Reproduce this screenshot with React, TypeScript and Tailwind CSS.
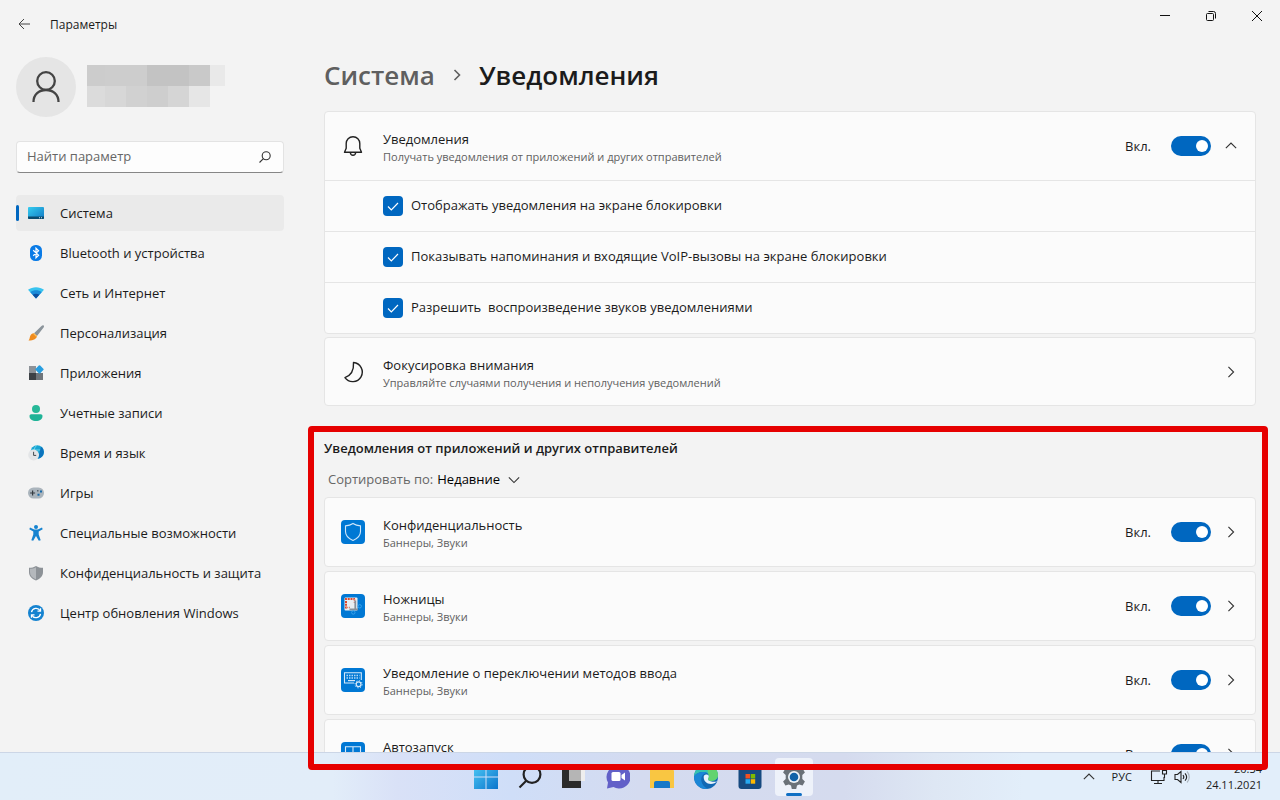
import React from "react";

const navItems = [
  { label: "Система", icon: "system" },
  { label: "Bluetooth и устройства", icon: "bluetooth" },
  { label: "Сеть и Интернет", icon: "wifi" },
  { label: "Персонализация", icon: "brush" },
  { label: "Приложения", icon: "apps" },
  { label: "Учетные записи", icon: "account" },
  { label: "Время и язык", icon: "time" },
  { label: "Игры", icon: "games" },
  { label: "Специальные возможности", icon: "access" },
  { label: "Конфиденциальность и защита", icon: "shield" },
  { label: "Центр обновления Windows", icon: "update" },
];

const checks = [
  "Отображать уведомления на экране блокировки",
  "Показывать напоминания и входящие VoIP-вызовы на экране блокировки",
  "Разрешить  воспроизведение звуков уведомлениями",
];

const senders = [
  { name: "Конфиденциальность", icon: "privacy" },
  { name: "Ножницы", icon: "snip" },
  { name: "Уведомление о переключении методов ввода", icon: "keyboard" },
  { name: "Автозапуск", icon: "autoplay" },
];

const navShapes: Record<string, React.ReactNode> = {
  system: (
    <>
      <rect x="0" y="2" width="16" height="12" rx="1" fill="url(#sys)" />
      <path d="M0 11.5h16V13a1 1 0 0 1-1 1H1a1 1 0 0 1-1-1z" fill="#0b4a6e" />
      <path d="M11 12.3h1v1h-1zM13 12.3h1v1h-1z" fill="#cfe6f2" />
    </>
  ),
  bluetooth: (
    <>
      <rect x="2" y="0" width="12" height="16" rx="5.5" fill="#0a7be6" />
      <path d="M5.2 5.3l5.400 5L8 12.800V3.200l2.600 2.500-5.400 5" fill="none" stroke="#fff" strokeWidth="1.200" />
    </>
  ),
  wifi: (
    <>
      <path d="M0 4.700C4.500 1.300 11.500 1.300 16 4.700L8 13.500z" fill="#38c3ef" />
      <path d="M2.300 7.200c3.300-2.600 8.100-2.600 11.400 0L8 13.500z" fill="#1a8bd8" />
      <path d="M4.600 9.800c2-1.500 4.800-1.500 6.800 0L8 13.500z" fill="#0c4f9f" />
    </>
  ),
  brush: (
    <>
      <path d="M15.600.4c.8.800.3 1.700-.2 2.400L9 11 6 8.200 13.500.9c.7-.6 1.500-1 2.100-.5z" fill="#8b949b" />
      <path d="M6 8.200L9 11c-.3 2.600-3 4.500-8.500 4.600 1.300-1.300 1-2.500 1.600-4.300.7-2 2.300-3.200 3.900-3.100z" fill="#f08c1e" />
      <path d="M6 8.200L9 11l-.4 1.300-3.800-3.700z" fill="#fbbd55" />
    </>
  ),
  apps: (
    <>
      <path d="M1 1h7v7H1z" fill="#8d9298" />
      <path d="M1 8h7v7H1z" fill="#3d4146" />
      <path d="M8 8h7v7H8z" fill="#6f757b" />
      <rect x="8.300" y="1.200" width="6.400" height="6.400" rx="1" transform="rotate(45 11.500 4.400)" fill="#279ee0" />
    </>
  ),
  account: (
    <>
      <circle cx="8" cy="4" r="4" fill="#27b898" />
      <path d="M1.500 11c0-1 .7-1.700 1.700-1.700h9.600c1 0 1.700.7 1.700 1.700 0 3.300-2.800 5-6.500 5s-6.500-1.700-6.500-5z" fill="#1fb397" />
    </>
  ),
  time: (
    <>
      <circle cx="9.200" cy="7" r="6.800" fill="#1aa5d3" />
      <path d="M9 .3c-4 2-4 11 1 13.400M3 5h12.500M3 9.500h12" fill="none" stroke="#7be0ef" strokeWidth=".8" />
      <path d="M13 1.500a6.800 6.800 0 0 1-3 12.200z" fill="#0c73bd" />
      <circle cx="5.600" cy="10" r="5.400" fill="#e3e5e7" />
      <path d="M5.600 6.800v3.600h2.600" fill="none" stroke="#43494e" strokeWidth="1" />
    </>
  ),
  games: (
    <>
      <rect x="0" y="2.500" width="16" height="11" rx="5.500" fill="#aab4bc" />
      <path d="M4.600 5.500v5M2.100 8h5" stroke="#343a40" strokeWidth="1.200" />
      <path d="M9.500 8.800h2v2h-2zM12 5.500h2v2h-2z" fill="#1769a8" />
      <path d="M9 5h1.500v1.500H9z" fill="#59646d" />
    </>
  ),
  access: (
    <>
      <circle cx="8" cy="2" r="2" fill="#1583d0" />
      <path d="M2 2.600l4.200 1.900h3.600L14 2.600l.7 1.600-4 2.200v3.200l2 5.600-1.900.6L8 11l-2.800 4.800-1.900-.6 2-5.600V6.400l-4-2.200z" fill="#1583d0" />
    </>
  ),
  shield: (
    <>
      <path d="M8 1c2 1.300 4.300 1.800 7 1.800V7c0 4-2.500 6.700-7 8.500C3.500 13.700 1 11 1 7V2.800C3.700 2.800 6 2.300 8 1z" fill="#8d9297" />
      <path d="M8 2.200v12.200C4.200 12.800 2 10.500 2 7V3.700c2.300 0 4.300-.5 6-1.500z" fill="#b4b8bc" />
    </>
  ),
  update: (
    <>
      <circle cx="8" cy="8" r="8" fill="#1583d0" />
      <path d="M3.500 7.200a4.600 4.600 0 0 1 8.600-1.400M12.500 8.800a4.600 4.600 0 0 1-8.600 1.400" fill="none" stroke="#fff" strokeWidth="1.300" />
      <path d="M12.500 3.200v3H9.500M3.500 12.800v-3h3" fill="none" stroke="#fff" strokeWidth="1.300" />
    </>
  ),
};

const NavIcon = ({ name }: { name: string }) => (
  <svg viewBox="0 0 16 16" className="size-4 shrink-0">
    <defs>
      <linearGradient id="sys" x1="0" y1="0" x2="1" y2="1">
        <stop offset="0" stopColor="#35cdf0" />
        <stop offset="1" stopColor="#1279c4" />
      </linearGradient>
    </defs>
    {navShapes[name]}
  </svg>
);

const senderShapes: Record<string, React.ReactNode> = {
  privacy: (
    <path d="M12 3.500c2.200 1.500 4.500 2.200 7.500 2.400v5.500c0 4.200-2.900 7-7.500 9-4.600-2-7.500-4.800-7.500-9V5.900C7.500 5.700 9.800 5 12 3.500z" fill="none" stroke="#cfe6fa" strokeWidth="1.100" />
  ),
  snip: (
    <>
      <rect x="3.500" y="3.500" width="13" height="13" rx="1" fill="#e9eef2" />
      <path d="M5 14.500V5h9" fill="none" stroke="#dd4a2f" strokeWidth="2" strokeDasharray="2 .8" />
      <path d="M5 13.500h4M13.500 5v4" fill="none" stroke="#e38673" strokeWidth="1.600" strokeDasharray="2 .8" />
      <path d="M14.300 6.500v8.500M8.500 15.300h8.500" stroke="#87919a" strokeWidth="1.800" />
      <circle cx="12.300" cy="18.500" r="1.700" fill="none" stroke="#36a1ea" />
      <circle cx="18.700" cy="12.300" r="1.700" fill="none" stroke="#36a1ea" />
    </>
  ),
  keyboard: (
    <>
      <path d="M13 15H3.500V4.700h16.800V12" fill="none" stroke="#d6eafa" strokeWidth="1.100" />
      <path d="M5.500 7.500h13M5.500 10h13" stroke="#b6d9f6" strokeWidth="1.300" strokeDasharray="1.500 1" />
      <path d="M7 12.600h7" stroke="#d6eafa" strokeWidth="1.200" />
      <circle cx="17.600" cy="16.300" r="2.400" fill="#0078d4" stroke="#d6eafa" strokeWidth="1.200" />
      <circle cx="17.600" cy="16.300" r="3.600" fill="none" stroke="#d6eafa" strokeWidth="1" strokeDasharray="1.200 1.600" />
    </>
  ),
  autoplay: (
    <path d="M4.500 4.700h15v12h-15zM12 4.700v12M4.500 10.700h15" fill="none" stroke="#d6eafa" strokeWidth="1.100" />
  ),
};

const Chevron = ({ dir }: { dir: "up" | "right" | "down" }) => {
  const paths = { up: "M1 9.500l6-6 6 6", right: "M4 1l6 6-6 6", down: "M1 4l6 6 6-6" };
  return (
    <svg viewBox="0 0 14 14" className="size-3 shrink-0">
      <path d={paths[dir]} fill="none" stroke="#333" strokeWidth="1.300" />
    </svg>
  );
};

const Toggle = ({ label }: { label: string }) => (
  <label className="flex items-center gap-5 text-[13px]">
    <span className="pt-0.5">Вкл.</span>
    <input type="checkbox" role="switch" defaultChecked aria-label={label} className="sr-only" />
    <span className="flex h-5 w-10 items-center justify-end rounded-full bg-[#0067c0] px-[3px]">
      <span className="size-3 rounded-full bg-white" />
    </span>
  </label>
);

const RowText = ({ title, note }: { title: string; note: string }) => (
  <div className="min-w-0 flex-1 pt-0.5">
    <p className="text-[13px] leading-5">{title}</p>
    <p className="text-[11px] leading-4 text-[#616161]">{note}</p>
  </div>
);

const Sidebar = () => (
  <aside className="ml-4 w-[268px] shrink-0">
    <div className="mt-[9px] flex h-[60px] items-center gap-[11px]">
      <div className="flex size-[60px] items-center justify-center rounded-full bg-[#e5e5e5]">
        <svg viewBox="0 0 30 32" className="h-8 w-[30px]" fill="none" stroke="#444" strokeWidth="2.300">
          <circle cx="15" cy="10" r="8.800" />
          <path d="M2.500 31C2.500 23.500 8 19 15 19s12.500 4.500 12.500 12" />
        </svg>
      </div>
      <div className="pb-0.5">
        <div className="flex h-[21px]">
          <span className="w-[18px] bg-[#cccccc]" />
          <span className="w-[42px] bg-[#cdcdcd]" />
          <span className="w-[42px] bg-[#c3c3c3]" />
          <span className="w-[21px] bg-[#c9c9c9]" />
          <span className="w-[15px] bg-[#e9e9e9]" />
        </div>
        <div className="flex h-[21px]">
          <span className="w-[18px] bg-[#dbdbdb]" />
          <span className="w-[21px] bg-[#d7d7d7]" />
          <span className="w-[21px] bg-[#d1d1d1]" />
          <span className="w-[21px] bg-[#cecece]" />
          <span className="w-[21px] bg-[#d5d5d5]" />
          <span className="w-[21px] bg-[#e6e6e6]" />
        </div>
      </div>
    </div>
    <label className="mt-6 flex h-8 items-center rounded border border-[#e3e3e3] border-b-[#868686] bg-[#fdfdfd] pr-3 pl-[10px]">
      <input type="search" placeholder="Найти параметр" aria-label="Найти параметр" className="min-w-0 flex-1 text-[13px] outline-none placeholder:text-[#666]" />
      <svg viewBox="0 0 12 12" className="size-3" fill="none" stroke="#333" strokeWidth="1.100">
        <circle cx="7.200" cy="4.800" r="4" />
        <path d="M4.400 7.600L.5 11.500" />
      </svg>
    </label>
    <nav className="mt-[22px] flex flex-col gap-1">
      {navItems.map((item, i) => (
        <a
          key={item.label}
          href="#"
          className={
            i === 0
              ? "flex h-9 items-center rounded bg-[#eaeaea] text-[13px]"
              : "flex h-9 items-center rounded text-[13px]"
          }
        >
          <span className={i === 0 ? "mr-[9px] h-4 w-[3px] rounded-full bg-[#0067c0]" : "mr-[9px] h-4 w-[3px]"} />
          <NavIcon name={item.icon} />
          <span className="ml-4 pt-0.5">{item.label}</span>
        </a>
      ))}
    </nav>
  </aside>
);

const Content = () => (
  <main className="min-w-0 flex-1 pr-6 pl-10">
    <h1 className="mt-[7px] flex h-10 items-center text-[26px] font-semibold">
      <a href="#" className="text-[#5f5f5f]">Система</a>
      <svg viewBox="0 0 12 12" className="mx-4 size-3" fill="none" stroke="#5f5f5f" strokeWidth="1.600">
        <path d="M3.500 1l5 5-5 5" />
      </svg>
      <span>Уведомления</span>
    </h1>
    <section className="mt-4 rounded border border-[#e5e5e5] bg-[#fbfbfb]">
      <div className="flex h-[68px] items-center pr-[18px] pl-4">
        <svg viewBox="0 0 24 24" className="mr-[18px] size-6" fill="none" stroke="#222" strokeWidth="1.400">
          <path d="M12 2.800c-4 0-6.800 3-6.800 6.800v4.600L3.500 18.300h17l-1.700-4.100V9.600c0-3.800-2.800-6.800-6.800-6.800z" strokeLinejoin="round" />
          <path d="M9.300 18.500c.2 1.800 1.200 2.800 2.700 2.800s2.500-1 2.700-2.800" />
        </svg>
        <RowText title="Уведомления" note="Получать уведомления от приложений и других отправителей" />
        <Toggle label="Уведомления" />
        <button className="ml-[14px]" aria-label="Свернуть">
          <Chevron dir="up" />
        </button>
      </div>
      {checks.map((text) => (
        <label key={text} className="flex h-[51px] items-center gap-2 border-t border-[#e5e5e5] pl-[58px] text-[13px] whitespace-pre">
          <span className="grid size-5 place-items-center">
            <input type="checkbox" defaultChecked className="col-start-1 row-start-1 size-5 appearance-none rounded bg-[#0067c0]" />
            <svg viewBox="0 0 12 12" className="pointer-events-none col-start-1 row-start-1 size-3" fill="none" stroke="#fff" strokeWidth="1.200">
              <path d="M1 6.500l3.300 3.300L11 3" />
            </svg>
          </span>
          <span>{text}</span>
        </label>
      ))}
    </section>
    <a href="#" className="mt-[3px] flex h-[69px] items-center rounded border border-[#e5e5e5] bg-[#fbfbfb] pr-[18px] pl-4">
      <svg viewBox="0 0 24 24" className="mr-[18px] size-6" fill="none" stroke="#222" strokeWidth="1.400" strokeLinejoin="round">
        <path d="M12.500 2.500a9.600 9.600 0 1 1-8.600 15.200c5.600-2.100 9.200-6.200 8.600-15.200z" />
      </svg>
      <RowText title="Фокусировка внимания" note="Управляйте случаями получения и неполучения уведомлений" />
      <Chevron dir="right" />
    </a>
    <h2 className="mt-8 text-[13px] leading-5 font-semibold">Уведомления от приложений и других отправителей</h2>
    <button className="mt-3 ml-1 flex h-5 items-center text-[13px]">
      <span className="text-[#666]">Сортировать по:</span>
      <span className="mr-2 ml-1 font-medium text-black">Недавние</span>
      <Chevron dir="down" />
    </button>
    <div className="mt-[7px] flex flex-col gap-1">
      {senders.map((s) => (
        <div key={s.name} className="flex h-[70px] items-center rounded border border-[#e5e5e5] bg-[#fbfbfb] pr-[18px] pl-4">
          <svg viewBox="0 0 24 24" className="mr-[18px] size-6">
            <rect width="24" height="24" rx="4" fill="#0078d4" />
            {senderShapes[s.icon]}
          </svg>
          <RowText title={s.name} note="Баннеры, Звуки" />
          <Toggle label={s.name} />
          <button className="ml-[14px]" aria-label={s.name}>
            <Chevron dir="right" />
          </button>
        </div>
      ))}
    </div>
  </main>
);

const taskApps = [
  {
    name: "Пуск",
    art: (
      <>
        <defs>
          <linearGradient id="win" gradientUnits="userSpaceOnUse" x1="0" y1="0" x2="24" y2="24">
            <stop offset="0" stopColor="#4cc8f5" />
            <stop offset="1" stopColor="#0a74cc" />
          </linearGradient>
        </defs>
        <path d="M0 0h11.500v11.500H0zM12.500 0H24v11.500H12.500zM0 12.500h11.500V24H0zM12.500 12.500H24V24H12.500z" fill="url(#win)" />
      </>
    ),
  },
  {
    name: "Поиск",
    art: (
      <g fill="none" stroke="#222" strokeWidth="2.200">
        <circle cx="14" cy="9.500" r="8.400" />
        <path d="M8 16l-6.500 6.500" />
      </g>
    ),
  },
  {
    name: "Представление задач",
    art: (
      <>
        <path d="M0 5h19v18H0z" fill="#2b2b2b" />
        <path d="M7 1h16v15H7z" fill="#eeeeee" />
        <path d="M7 5h12v11H7z" fill="#b5b5b5" />
      </>
    ),
  },
  {
    name: "Чат",
    art: (
      <>
        <path d="M12.500.5A11.500 11.500 0 1 1 7.500 22L1 23.500l1-6A11.500 11.500 0 0 1 12.500.5z" fill="#6260c8" />
        <rect x="5.500" y="7" width="9" height="9" rx="1.500" fill="#fff" />
        <path d="M15.500 10l3.500-2.500v8L15.500 13z" fill="#fff" />
      </>
    ),
  },
  {
    name: "Проводник",
    art: (
      <>
        <path d="M0 3a1 1 0 0 1 1-1h8l3 3h11a1 1 0 0 1 1 1v17H0z" fill="#f9c642" />
        <path d="M4 23v-5a2 2 0 0 1 2-2h12a2 2 0 0 1 2 2v5z" fill="#1678c8" />
      </>
    ),
  },
  {
    name: "Edge",
    art: (
      <>
        <circle cx="12" cy="12" r="12" fill="#1268b3" />
        <path d="M0 12C0 4.500 5.500 0 12 0c7 0 12 4.600 12 9.800 0 4-3 6.200-6.400 6.200-2.200 0-3.600-.8-3.600-2 0-1 .8-1.300.8-3C14.800 8.600 12.500 7 9.500 7 5 7 1 9 0 12z" fill="#35c1b1" />
        <path d="M12.500 0C19 .3 24 4.700 24 9.800c0 4-3 6.200-6.400 6.200-2.200 0-3.600-.8-3.600-2 0-1 .8-1.300.8-3z" fill="#62d36f" />
        <path d="M0 12c1-3 5-5 9.500-5 1.500 0 2.500.3 3.500 1-4 .5-6.500 4-5.500 8.500.7 3 2.800 6 6.500 7.300C6 25 0 19 0 12z" fill="#1b86d6" />
        <path d="M9.800 11c-.8 4.800 3 8 7 8 2.500 0 5-1 6.500-3-2 1-4 1-5.700.5-3-.5-3.600-1.300-3.600-2.500 0-1 .8-1.300.8-3-.8-2-3.800-2-5 0z" fill="#e8f2fb" />
      </>
    ),
  },
  {
    name: "Store",
    art: (
      <>
        <rect x=".5" y="2" width="23" height="22" rx="3" fill="#174a80" />
        <path d="M7.500 9h4.500v4.500H7.500z" fill="#f25022" />
        <path d="M12.700 9h4.500v4.500h-4.500z" fill="#7fba00" />
        <path d="M7.500 14.200h4.500v4.500H7.500z" fill="#27a9f0" />
        <path d="M12.700 14.200h4.500v4.500h-4.500z" fill="#ffb900" />
      </>
    ),
  },
  {
    name: "Параметры",
    art: (
      <>
        <path d="M9.800 0h4.400l.8 3.400 2.200 1.200 3.400-1 2.300 3.900-2.600 2.400v4.200l2.600 2.400-2.300 3.900-3.400-1-2.200 1.200-.8 3.400H9.800L9 20.600l-2.200-1.200-3.400 1-2.300-3.900 2.600-2.400V9.900L1.100 7.500l2.300-3.900 3.400 1L9 3.400z" fill="#6a7178" />
        <circle cx="12" cy="12" r="6" fill="#eef3f8" />
        <circle cx="12" cy="12" r="4.300" fill="#1162a8" />
      </>
    ),
  },
];

const Taskbar = () => (
  <footer className="grid h-12 shrink-0 grid-cols-[1fr_auto_1fr] items-center border-t border-[#ccd6e6] bg-[linear-gradient(to_right,#e2eef9_0%,#e2edf9_26%,#d9e1f7_31%,#cfdef8_40%,#d4dbf0_50%,#d5dbee_66%,#dee7f4_73%,#e2eefa_80%)]">
    <div />
    <div className="flex">
      {taskApps.map((app, i) => (
        <button key={app.name} aria-label={app.name} className="flex h-12 w-11 items-center justify-center">
          <span
            className={
              i === taskApps.length - 1
                ? "relative flex size-[38px] items-center justify-center rounded bg-[#eef2fa]"
                : "flex items-center justify-center"
            }
          >
            <svg viewBox="0 0 24 24" className="size-6">
              {app.art}
            </svg>
            {i === taskApps.length - 1 && (
              <span className="absolute bottom-0 h-[3px] w-4 rounded-full bg-[#0f6fc4]" />
            )}
          </span>
        </button>
      ))}
    </div>
    <div className="flex items-center justify-end pr-[18px] text-[#1b1b1b]">
      <button aria-label="Скрытые значки">
        <Chevron dir="up" />
      </button>
      <button className="ml-[17px] text-[11px]">РУС</button>
      <svg viewBox="0 0 18 16" className="ml-[18px] h-4 w-[18px]" fill="none" stroke="#222" strokeWidth="1.100">
        <path d="M10 2H1.500v9.500H14V8M4 14.500h8M8 11.500v3M12.500 1.500h4v3.500h-4zM14.500 5v4" />
      </svg>
      <svg viewBox="0 0 16 16" className="ml-[6px] size-4" fill="none" stroke="#222" strokeWidth="1.100">
        <path d="M1 5.500h2.500L7 2.500v11l-3.500-3H1zM9 6c1 1.200 1 2.800 0 4M11 4.300c2 2.200 2 5.200 0 7.400" />
        <path d="M13 2.500c3 3.200 3 7.800 0 11" stroke="#a9b3bd" />
      </svg>
      <div className="ml-4 text-right text-[11px] leading-4">
        <p>20:34</p>
        <p>24.11.2021</p>
      </div>
    </div>
  </footer>
);

const App = () => {
  return (
    <div className="relative flex h-screen flex-col overflow-hidden bg-[#f3f3f3] font-['Open_Sans','Noto_Sans',sans-serif] text-[#1b1b1b]">
      <header className="flex h-12 shrink-0 items-center">
        <button aria-label="Назад" className="ml-[18px]">
          <svg viewBox="0 0 12 12" className="size-3" fill="none" stroke="#444" strokeWidth="1">
            <path d="M6 1L1 6l5 5M1 6h11" />
          </svg>
        </button>
        <span className="ml-5 pt-0.5 text-xs">Параметры</span>
        <div className="ml-auto flex h-8 self-start">
          <button aria-label="Свернуть" className="flex w-[46px] items-center justify-center">
            <svg viewBox="0 0 10 10" className="size-[10px]" stroke="#111">
              <path d="M0 4.500h10" />
            </svg>
          </button>
          <button aria-label="Восстановить" className="flex w-[46px] items-center justify-center">
            <svg viewBox="0 0 10 10" className="size-[10px]" fill="none" stroke="#111">
              <rect x=".5" y="2.500" width="7" height="7" rx="1" />
              <path d="M2.500.5h5a2 2 0 0 1 2 2v5" />
            </svg>
          </button>
          <button aria-label="Закрыть" className="flex w-[46px] items-center justify-center">
            <svg viewBox="0 0 10 10" className="size-[10px]" stroke="#111">
              <path d="M0 0l10 10M10 0L0 10" />
            </svg>
          </button>
        </div>
      </header>
      <div className="flex min-h-0 flex-1 overflow-hidden">
        <Sidebar />
        <Content />
      </div>
      <Taskbar />
      {/* highlight frame over the senders list */}
      <div className="pointer-events-none absolute top-[426px] right-3 bottom-[30px] left-[308px] rounded-sm border-6 border-[#e60000]" />
    </div>
  );
};

export default App;
